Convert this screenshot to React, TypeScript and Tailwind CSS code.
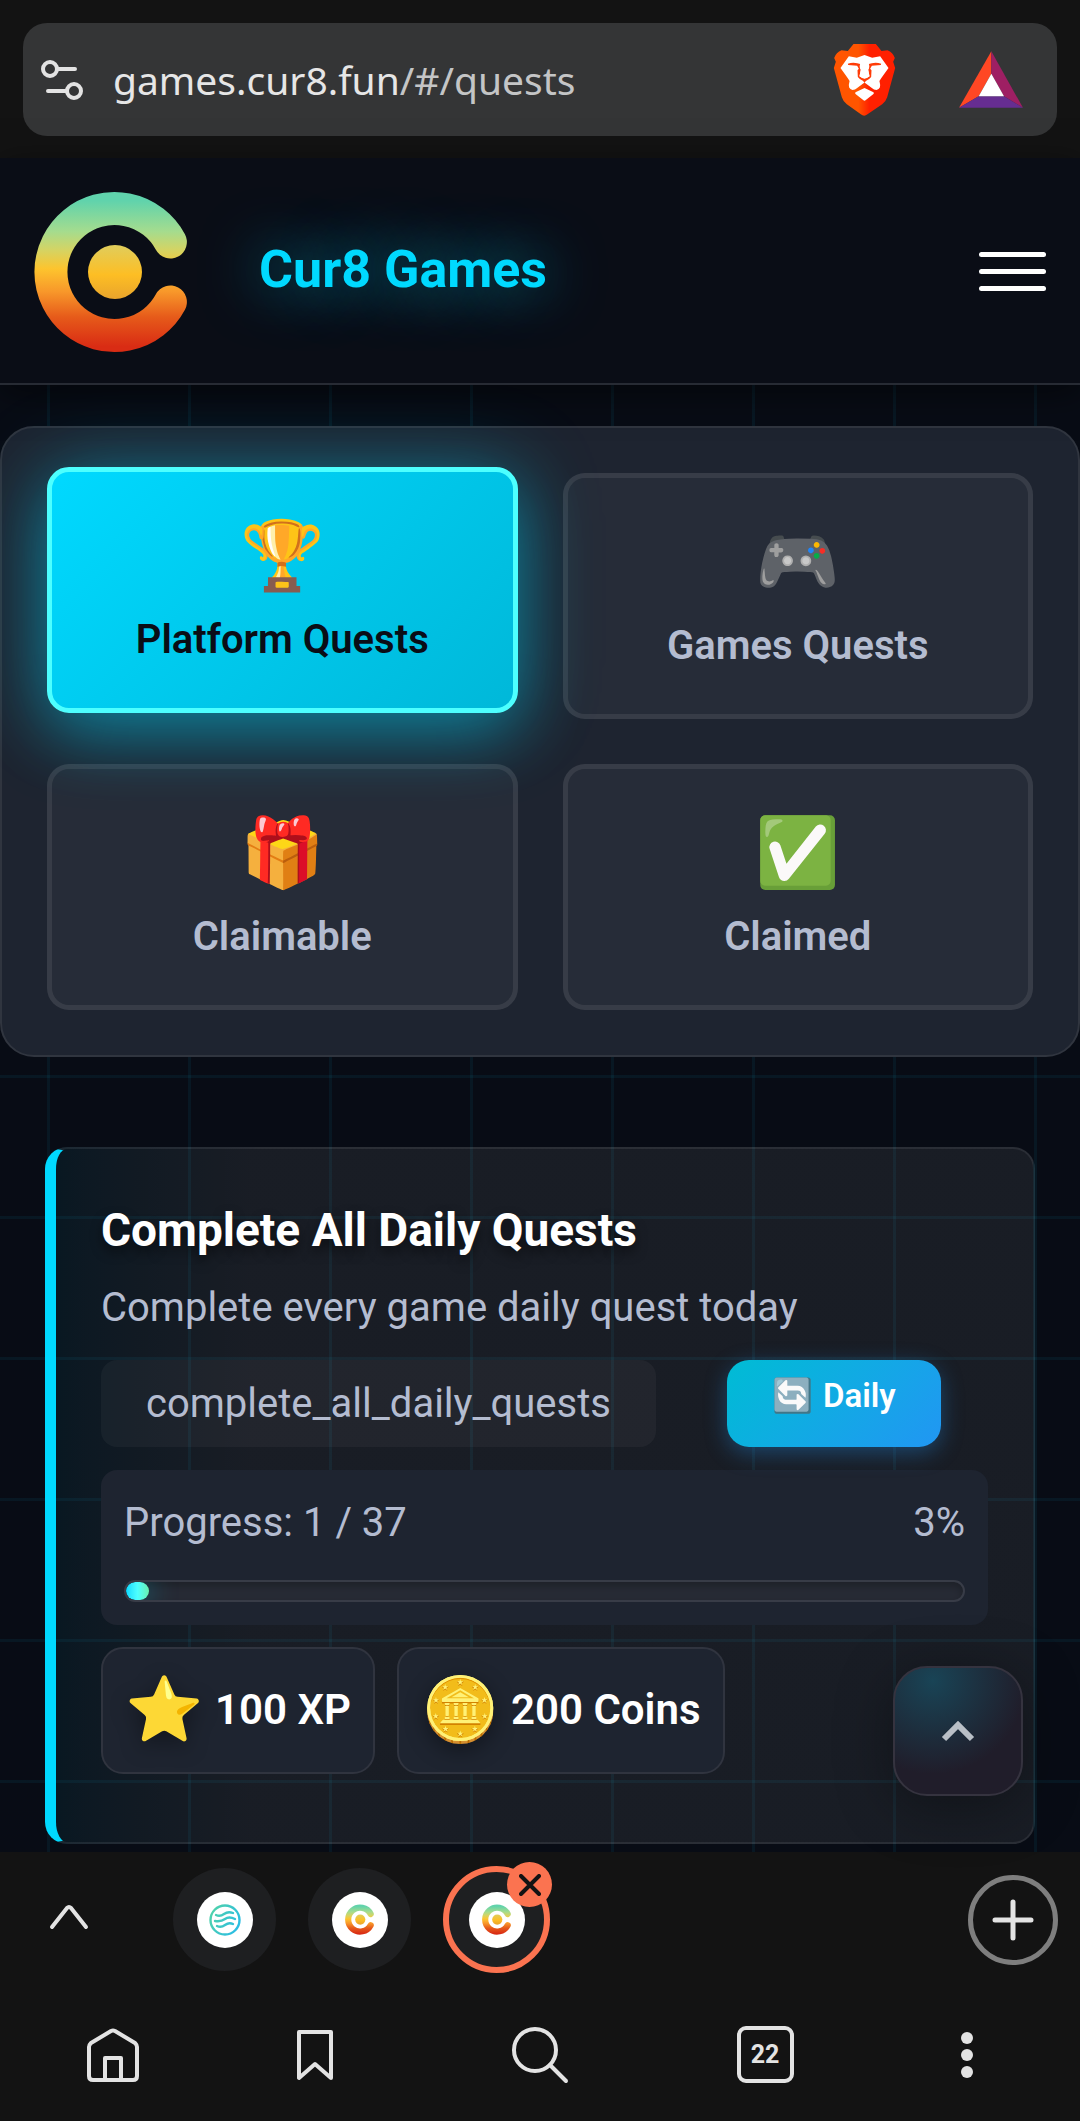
import { useId, useState } from 'react';
import clsx from 'clsx';

const CATEGORIES = [
  { id: 'platform', icon: '🏆', label: 'Platform Quests' },
  { id: 'games', icon: '🎮', label: 'Games Quests' },
  { id: 'claimable', icon: '🎁', label: 'Claimable' },
  { id: 'claimed', icon: '✅', label: 'Claimed' },
];

const QUEST = {
  title: 'Complete All Daily Quests',
  description: 'Complete every game daily quest today',
  code: 'complete_all_daily_quests',
  done: 1,
  total: 37,
  rewards: [
    { icon: '⭐', label: '100 XP' },
    { icon: '🪙', label: '200 Coins' },
  ],
};

const Cur8Logo = ({ className }: { className?: string }) => {
  const id = useId();

  return (
    <svg viewBox="14 20 154 163" className={className} aria-hidden="true">
      <defs>
        <linearGradient id={`${id}ring`} gradientUnits="userSpaceOnUse" x1="0" y1="21" x2="0" y2="183">
          <stop offset="0.06" stopColor="#60d3ac" />
          <stop offset="0.25" stopColor="#a5dc8e" />
          <stop offset="0.36" stopColor="#d3d465" />
          <stop offset="0.48" stopColor="#fdc42e" />
          <stop offset="0.62" stopColor="#f8982a" />
          <stop offset="0.78" stopColor="#e65a1a" />
          <stop offset="0.96" stopColor="#d92c14" />
        </linearGradient>
        <linearGradient id={`${id}dot`} x1="0" y1="0" x2="0" y2="1">
          <stop offset="0" stopColor="#e0cd5c" />
          <stop offset="0.55" stopColor="#fdbe24" />
          <stop offset="1" stopColor="#e9a42c" />
        </linearGradient>
      </defs>
      <path
        d="M150.4 72A63.5 63.5 0 1 0 150.4 132"
        fill="none"
        stroke={`url(#${id}ring)`}
        strokeWidth="33"
        strokeLinecap="round"
      />
      <circle cx="95" cy="102" r="27" fill={`url(#${id}dot)`} />
    </svg>
  );
};

const BraveIcon = () => (
  <svg viewBox="156 70 194 222" className="h-[74px] w-[65px]" aria-hidden="true">
    <defs>
      <linearGradient id="brave" x1="0" y1="0" x2="1" y2="0">
        <stop offset="0.4" stopColor="#ff5500" />
        <stop offset="0.58" stopColor="#ff2000" />
      </linearGradient>
    </defs>
    <path
      fill="url(#brave)"
      d="M220 73H287L304 94L322 92Q338 98 344 115L339 126L345 145L321 233Q317 246 306 254L262 284Q252 292 242 284L200 254Q189 246 185 233L161 145L167 126L162 115Q168 98 184 92L203 94Z"
    />
    <path
      fill="#fff"
      d="M206 110L230 114L253 106L276 114L300 110L325 145L303 176Q296 183 299 190Q304 206 289 211Q281 211 275 205L256 191Q253 188 250 191L231 205Q225 211 217 211Q202 206 207 190Q210 183 203 176L181 145Z"
    />
    <path
      fill="#ff3c08"
      d="M203 132Q222 126 243 134Q236 142 242 150L238 170Q246 177 253 177Q260 177 268 170L264 150Q270 142 263 134Q284 126 303 132L302 136L275 138L270 147L274 152L273 172Q268 179 257 184L253 190L249 184Q238 179 233 172L232 152L236 147L231 138L204 136Z"
    />
    <path fill="#fff" d="M242 128H264Q271 141 264 150L268 170Q260 176 253 176Q246 176 238 170L242 150Q235 141 242 128Z" />
    <path fill="#fff" d="M253 205L280 218Q283 221 279 224L257 241Q253 245 249 241L227 224Q223 221 226 218Z" />
  </svg>
);

const BatIcon = () => (
  <svg viewBox="535 92 198 176" className="h-[59px] w-[66px]" aria-hidden="true">
    <path fill="#ff4724" d="M635 95L538 265L597 230L635 163Z" />
    <path fill="#9e1f63" d="M635 95L730 265L673 230L635 163Z" />
    <path fill="#662d91" d="M538 265H730L673 230H597Z" />
    <path fill="#fff" d="M635 163L673 230H597Z" />
  </svg>
);

const AddressBar = () => (
  <div className="bg-[#131313] px-[23px] pt-[23px] pb-[22px]">
    <div className="flex h-[113px] items-center rounded-[24px] bg-[#343536] pr-[33px] pl-[17px]">
      <button type="button" aria-label="Site settings">
        <svg viewBox="0 0 44 40" className="h-10 w-11" fill="none" stroke="#e3e3e3" strokeWidth="4" strokeLinecap="round">
          <circle cx="10" cy="9" r="7" />
          <path d="M18 9H35M8 31H26" />
          <circle cx="34" cy="31" r="7" />
        </svg>
      </button>
      <button type="button" className="ml-[29px] flex-1 text-left font-['Noto_Sans',sans-serif] text-[39px] leading-[56px] text-[#c4c5c6]">
        <span className="text-[#e6e6e6]">games.cur8.fun</span>/#/quests
      </button>
      <div className="flex items-center gap-[61px]">
        <button type="button" aria-label="Brave Shields">
          <BraveIcon />
        </button>
        <button type="button" aria-label="Brave Rewards">
          <BatIcon />
        </button>
      </div>
    </div>
  </div>
);

const Header = () => (
  <header className="relative z-10 flex items-center border-b-2 border-[#272b34] bg-[#0a0d16] pt-8 pr-[34px] pb-[30px] pl-[34px] shadow-[0_8px_32px_rgba(0,0,0,0.5)]">
    <Cur8Logo className="h-[163px] w-[154px]" />
    <h1 className="ml-[71px] flex-1 pb-1 text-[52px] leading-[64px] font-bold text-[#00d9ff] [text-shadow:0_0_60px_rgba(0,217,255,0.7)]">
      Cur8 Games
    </h1>
    <button type="button" aria-label="Open menu" className="flex w-[67px] flex-col gap-3">
      <span className="h-[5px] rounded-full bg-white" />
      <span className="h-[5px] rounded-full bg-white" />
      <span className="h-[5px] rounded-full bg-white" />
    </button>
  </header>
);

const CategoryTabs = () => {
  const [active, setActive] = useState('platform');

  return (
    <nav className="grid grid-cols-2 gap-[45px] rounded-[34px] border-2 border-[#30353f] bg-[#1e2430] p-[45px]">
      {CATEGORIES.map(({ id, icon, label }) => (
        <button
          key={id}
          type="button"
          onClick={() => setActive(id)}
          className={clsx(
            'flex flex-col items-center gap-5 rounded-[22px] border-[5px] pt-11 pb-11',
            active === id
              ? '-translate-y-1.5 border-[#4dffff] bg-linear-135 from-[#00d9ff] to-[#00b8d9] text-[#0a0d16] shadow-[0_22px_68px_rgba(0,217,255,0.4),0_0_84px_rgba(0,217,255,0.25)]'
              : 'border-white/8 bg-white/4 text-[#b4bcd0]'
          )}
        >
          <span className="text-[68px] leading-[80px]">{icon}</span>
          <span className="text-[40px] leading-[48px] font-semibold">{label}</span>
        </button>
      ))}
    </nav>
  );
};

const QuestCard = () => {
  const progress = (QUEST.done / QUEST.total) * 100;

  return (
    <article className="rounded-[22px] border-2 border-l-[11px] border-white/8 border-l-[#00d9ff] bg-linear-to-r from-[#00d9ff]/6 to-white/7 to-20% px-[45px] pt-[45px] pb-[68px] text-[40px] text-[#b4bcd0]">
      <h2 className="text-[46px] leading-[72px] font-bold text-white [text-shadow:0_6px_12px_rgba(0,0,0,0.5)]">{QUEST.title}</h2>
      <p className="mt-2.5 leading-[64px]">{QUEST.description}</p>

      <div className="mt-5 flex items-start gap-[71px]">
        <span className="rounded-[16px] bg-white/4 px-[45px] py-5 leading-[47px]">{QUEST.code}</span>
        <span className="flex items-center gap-2.5 rounded-[22px] bg-linear-135 from-[#00bcd4] to-[#2196f3] px-[45px] pt-3 pb-7 text-[33px] leading-[47px] font-semibold text-white shadow-[0_6px_22px_rgba(33,150,243,0.35)]">
          <span>🔄</span>Daily
        </span>
      </div>

      <div className="mt-[23px] rounded-[16px] bg-[#1e2430] px-[23px] pt-[22px] pb-[23px]">
        <div className="flex justify-between leading-[62px]">
          <span>
            Progress: {QUEST.done} / {QUEST.total}
          </span>
          <span>{Math.round(progress)}%</span>
        </div>
        <div
          role="progressbar"
          aria-label="Quest progress"
          aria-valuenow={Math.round(progress)}
          className="mt-[26px] h-[22px] overflow-hidden rounded-full border-2 border-[#383c47] bg-[#272b35] shadow-[inset_0_4px_8px_rgba(0,0,0,0.25)]"
        >
          <div
            className="h-full rounded-full bg-linear-to-r from-[#00d9ff] via-[#4dffff] to-[#69f0ae] shadow-[0_0_28px_rgba(0,217,255,0.5)]"
            style={{ width: `${progress}%` }}
          />
        </div>
      </div>

      <ul className="mt-[22px] flex gap-[22px] text-[42px] leading-[79px] font-semibold text-white">
        {QUEST.rewards.map(({ icon, label }) => (
          <li key={label} className="flex items-center gap-3 rounded-[22px] border-2 border-[#30343f] bg-[#1e2430] px-[22px] pt-[21px] pb-[23px]">
            <span className="text-[63px] drop-shadow-[0_6px_11px_rgba(0,0,0,0.4)]">{icon}</span>
            {label}
          </li>
        ))}
      </ul>
    </article>
  );
};

const ScrollTopButton = () => (
  <button
    type="button"
    aria-label="Scroll to top"
    className="absolute right-[57px] bottom-14 flex h-[130px] w-[130px] items-center justify-center rounded-[34px] border-2 border-[#35333f] bg-[#201d2a] bg-[radial-gradient(circle_at_30%_10%,#194456_0%,#201d2a_65%)] shadow-[0_10px_56px_rgba(0,0,0,0.35)]"
  >
    <svg viewBox="0 0 34 22" className="h-[22px] w-[34px]" fill="none" stroke="#b9bfc6" strokeWidth="6">
      <path d="M3 19L17 5L31 19" />
    </svg>
  </button>
);

const WaveIcon = () => (
  <svg viewBox="0 0 32 32" className="h-8 w-8" fill="none" strokeWidth="2.4" strokeLinecap="round" aria-hidden="true">
    <defs>
      <linearGradient id="wave" gradientUnits="userSpaceOnUse" x1="0" y1="8" x2="32" y2="24">
        <stop offset="0" stopColor="#52d3a8" />
        <stop offset="1" stopColor="#27bbe8" />
      </linearGradient>
    </defs>
    <g stroke="url(#wave)">
      <circle cx="16" cy="16" r="14.5" />
      <path d="M7 11Q11 13 15 10T24 9M6 17Q12 18 16 15T26 15M8 22Q12 24 16 21T24 20" />
    </g>
  </svg>
);

const TabStrip = () => (
  <div className="flex h-[135px] items-center pr-[22px] pl-[41px]">
    <button type="button" aria-label="Show tab groups" className="mr-[76px] flex w-14 justify-center pb-1.5">
      <svg viewBox="0 0 40 26" className="h-[26px] w-10" fill="none" stroke="#e3e3e3" strokeWidth="4" strokeLinecap="round" strokeLinejoin="round">
        <path d="M3 23L18 4Q20 2 22 4L37 23" />
      </svg>
    </button>
    <div className="flex items-center gap-8">
      <button type="button" aria-label="Tab 1" className="flex h-[103px] w-[103px] items-center justify-center rounded-full bg-[#1e1f21]">
        <span className="flex h-14 w-14 items-center justify-center rounded-full bg-white">
          <WaveIcon />
        </span>
      </button>
      <button type="button" aria-label="Tab 2" className="flex h-[103px] w-[103px] items-center justify-center rounded-full bg-[#1e1f21]">
        <span className="flex h-14 w-14 items-center justify-center rounded-full bg-white">
          <Cur8Logo className="h-[31px] w-[29px]" />
        </span>
      </button>
      <div className="relative">
        <button
          type="button"
          aria-label="Current tab"
          className="flex h-[107px] w-[107px] items-center justify-center rounded-full border-[6px] border-[#fb7350] bg-[#1e1f21]"
        >
          <span className="flex h-14 w-14 items-center justify-center rounded-full bg-white">
            <Cur8Logo className="h-[31px] w-[29px]" />
          </span>
        </button>
        <button
          type="button"
          aria-label="Close tab"
          className="absolute -top-1 -right-0.5 flex h-[45px] w-[45px] items-center justify-center rounded-full bg-[#fb7350]"
        >
          <svg viewBox="0 0 22 22" className="h-[22px] w-[22px]" fill="none" stroke="#131313" strokeWidth="4" strokeLinecap="round">
            <path d="M2 2L20 20M20 2L2 20" />
          </svg>
        </button>
      </div>
    </div>
    <button
      type="button"
      aria-label="New tab"
      className="ml-auto flex h-[90px] w-[90px] items-center justify-center rounded-full border-[5px] border-[#7e7e7e]"
    >
      <svg viewBox="0 0 42 42" className="h-[42px] w-[42px]" fill="none" stroke="#e3e3e3" strokeWidth="5" strokeLinecap="round">
        <path d="M21 3V39M3 21H39" />
      </svg>
    </button>
  </div>
);

const BottomNav = () => (
  <nav className="grid h-[135px] grid-cols-[202fr_202fr_248fr_202fr_202fr] place-items-center px-3">
    <button type="button" aria-label="Home">
      <svg viewBox="0 0 56 56" className="h-14 w-14" fill="none" stroke="#e3e3e3" strokeWidth="4" strokeLinejoin="round">
        <path d="M4 20Q4 18 6 16L26 4Q28 3 30 4L50 16Q52 18 52 20V49Q52 53 48 53H8Q4 53 4 49Z" />
        <path d="M20 53V31H36V53" />
      </svg>
    </button>
    <button type="button" aria-label="Bookmarks">
      <svg viewBox="0 0 40 54" className="h-[54px] w-10" fill="none" stroke="#e3e3e3" strokeWidth="4" strokeLinejoin="round">
        <path d="M4 4H36V50L20 36L4 50Z" />
      </svg>
    </button>
    <button type="button" aria-label="Search">
      <svg viewBox="0 0 60 60" className="h-[60px] w-[60px]" fill="none" stroke="#e3e3e3" strokeWidth="4" strokeLinecap="round">
        <circle cx="25" cy="25" r="21" />
        <path d="M40 40L56 56" />
      </svg>
    </button>
    <button
      type="button"
      aria-label="Tabs"
      className="flex h-[57px] w-[57px] items-center justify-center rounded-[9px] border-4 border-[#e3e3e3] text-[25px] leading-[30px] font-bold text-[#e3e3e3]"
    >
      22
    </button>
    <button type="button" aria-label="More" className="flex flex-col gap-[5px]">
      <span className="h-3 w-3 rounded-full bg-[#e3e3e3]" />
      <span className="h-3 w-3 rounded-full bg-[#e3e3e3]" />
      <span className="h-3 w-3 rounded-full bg-[#e3e3e3]" />
    </button>
  </nav>
);

export default function App() {
  return (
    <div className="min-h-screen bg-[#131313] font-['Roboto',sans-serif]">
      <AddressBar />
      <Header />
      <main className="relative bg-[#080c15] bg-[linear-gradient(rgba(0,217,255,0.06)_3px,transparent_3px),linear-gradient(90deg,rgba(0,217,255,0.06)_3px,transparent_3px)] bg-[length:141px_141px] bg-[position:47px_126px] pt-[41px] pb-2">
        <CategoryTabs />
        <div className="mt-[90px] px-[45px]">
          <QuestCard />
        </div>
        <ScrollTopButton />
      </main>
      <footer>
        <TabStrip />
        <BottomNav />
      </footer>
    </div>
  );
}
